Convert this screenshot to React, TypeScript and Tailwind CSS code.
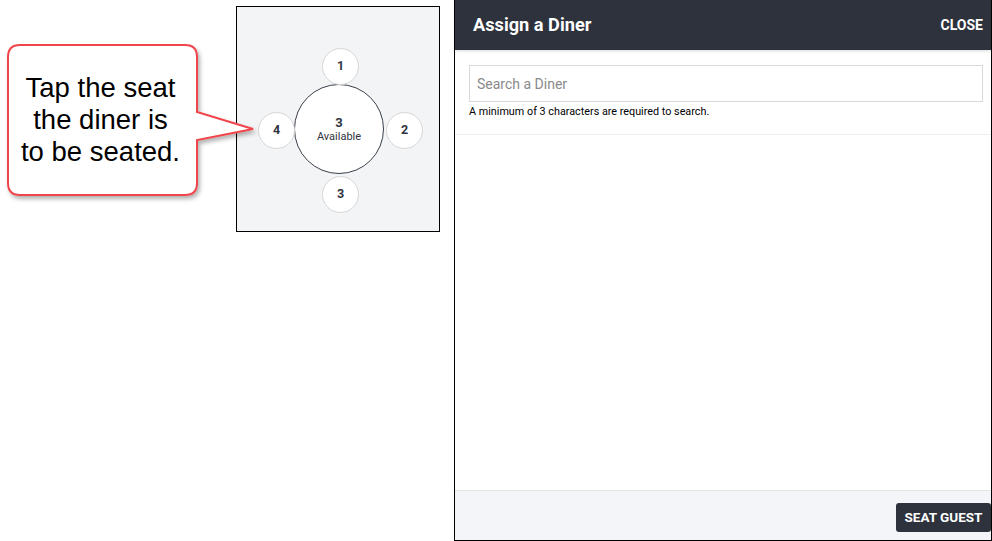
import React from 'react';

const seats = [
  { n: '1', x: 103, y: 59 },
  { n: '2', x: 167, y: 123 },
  { n: '3', x: 103, y: 187 },
  { n: '4', x: 39, y: 123 },
];

function Callout() {
  return (
    <div className="absolute left-0 top-0 w-[260px] h-[205px] pointer-events-none">
      <svg width="260" height="205" className="absolute inset-0">
        <defs>
          <filter id="sh" x="-10%" y="-10%" width="130%" height="130%">
            <feDropShadow dx="2" dy="3" stdDeviation="2" floodColor="#000" floodOpacity="0.3" />
          </filter>
        </defs>
        <path
          d="M20 45 H185 Q197 45 197 57 V112 L253 129 L197 140 V183 Q197 195 185 195 H20 Q8 195 8 183 V57 Q8 45 20 45 Z"
          fill="#fff"
          stroke="#f0454b"
          strokeWidth="2"
          strokeLinejoin="miter"
          filter="url(#sh)"
        />
      </svg>
      <div className="absolute left-[6px] top-[72px] w-[189px] text-center text-[27.5px] leading-[32px] text-black font-['Liberation_Sans',Arial,sans-serif]">
        <div>Tap the seat</div>
        <div>the diner is</div>
        <div>to be seated.</div>
      </div>
    </div>
  );
}

function TableMap() {
  return (
    <div className="ml-[236px] mt-[6px] w-[204px] h-[226px] border border-black bg-[#f3f4f6]">
      <div className="relative w-full h-full">
        <div className="absolute left-[57px] top-[77px] w-[90px] h-[90px] rounded-full bg-white border border-[#3a3f4a] flex flex-col items-center justify-center text-[#2f3440]">
          <span className="text-[13px] font-bold leading-[14px]">3</span>
          <span className="text-[11px] leading-[13px]">Available</span>
        </div>
        {seats.map((s) => (
          <div
            key={s.n}
            className="absolute w-[37px] h-[37px] -ml-[18px] -mt-[18px] rounded-full bg-white border border-[#d6d6d6] flex items-center justify-center text-[12.5px] font-bold text-[#2f3440]"
            style={{ left: s.x, top: s.y }}
          >
            {s.n}
          </div>
        ))}
      </div>
    </div>
  );
}

export default function App() {
  return (
    <div className="relative w-[992px] h-[541px] bg-white flex font-['Roboto','Liberation_Sans',sans-serif] overflow-hidden">
      <div className="w-[454px] shrink-0">
        <TableMap />
      </div>
      <Callout />

      <div className="w-[538px] h-[541px] border-l border-r border-b border-black flex flex-col">
        <div className="h-[50px] shrink-0 bg-[#2d323d] flex items-center justify-between pl-[18px] pr-[8px] shadow-[0_1px_3px_rgba(0,0,0,0.15)]">
          <span className="text-white text-[18.2px] font-bold">Assign a Diner</span>
          <span className="text-white text-[14px] font-bold">CLOSE</span>
        </div>

        <div className="pl-[14px] pr-[8px] pt-[15px] pb-[14px] border-b border-[#f0f0f0]">
          <div className="h-[37px] border border-[#d9d9d9] flex items-center px-[7px] pt-[2px] text-[14px] text-[#8a8a8a]">
            Search a Diner
          </div>
          <p className="mt-[2px] text-[10.8px] text-black">A minimum of 3 characters are required to search.</p>
        </div>

        <div className="flex-1" />

        <div className="h-[50px] shrink-0 bg-[#f4f5f8] border-t border-[#e4e4e4] flex items-start justify-end pt-[12px]">
          <button className="h-[29px] w-[95px] rounded-[3px] bg-[#2d323d] text-white text-[13.5px] font-bold">SEAT GUEST</button>
        </div>
      </div>
    </div>
  );
}
